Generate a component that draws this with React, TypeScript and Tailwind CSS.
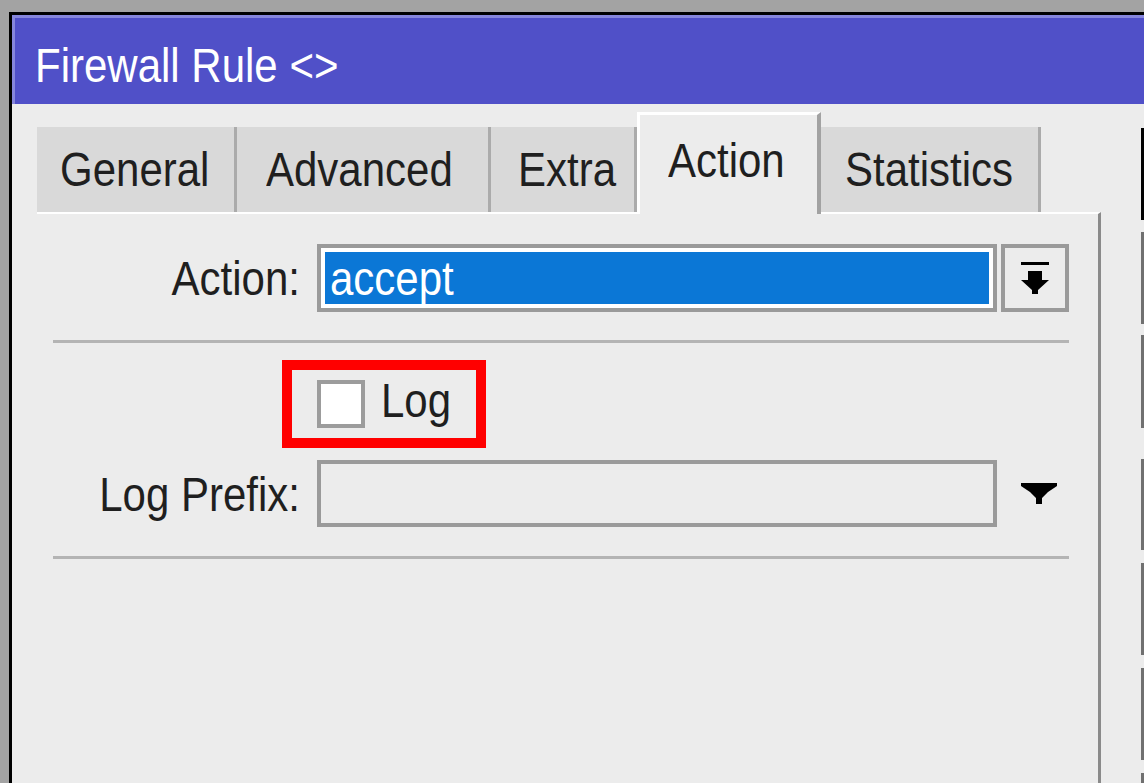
import type { ReactNode } from "react";

function T({ children }: { children: ReactNode }) {
  return <span className="inline-block origin-[50%_80%] scale-y-[1.13]">{children}</span>;
}

function Tab({ label, className }: { label: string; className: string }) {
  return (
    <div className={`h-[85px] shrink-0 bg-[#d9d9d9] border-r-[3px] border-[#ababab] pt-[21px] ${className}`}>
      <T>{label}</T>
    </div>
  );
}

export default function App() {
  return (
    <div className="w-[1144px] h-[783px] overflow-hidden bg-[#a3a3a3] pl-[9px] pt-[12px] font-['Liberation_Sans',Arial,sans-serif] text-[42px] leading-[48px] text-[#1f1f1f]">
      <div className="h-[800px] border-l-[3px] border-t-[3px] border-black bg-[#ececec] flex flex-col">
        {/* Title bar */}
        <div className="h-[89px] shrink-0 bg-[#5050c8] border-t-[3px] border-l-[3px] border-[#8686dc] pl-[20px] pt-[26px] text-white">
          <T>Firewall Rule &lt;&gt;</T>
        </div>

        <div className="flex-1 flex">
          {/* Tabs + panel */}
          <div className="w-[1089px] shrink-0 pl-[25px] pt-[8px] flex flex-col">
            <div className="h-[100px] flex items-end">
              <Tab label="General" className="w-[200px] pl-[23px] border-r-4" />
              <Tab label="Advanced" className="w-[254px] pl-[29px]" />
              <Tab label="Extra" className="w-[146px] pl-[27px] border-r-0" />
              <div className="w-[184px] h-[102px] -mb-[2px] relative z-10 bg-[#ececec] border-l-[3px] border-t-[3px] border-white border-r-4 border-r-[#a2a2a2] pl-[28px] pt-[24px]">
                <T>Action</T>
              </div>
              <Tab label="Statistics" className="w-[220px] pl-[24px]" />
            </div>

            <div className="flex-1 border-t-2 border-white border-r-[3px] border-r-[#8a8a8a] pl-[16px] pr-[29px]">
              {/* Action row */}
              <div className="mt-[30px] h-[68px] flex">
                <div className="w-[247px] text-right pt-[13px]">
                  <T>Action:</T>
                </div>
                <div className="ml-[17px] w-[680px] h-[68px] border-4 border-[#9a9a9a] bg-white p-[4px]">
                  <div className="h-full bg-[#0b77d6] text-white pl-[5px] pt-[5px]">
                    <T>accept</T>
                  </div>
                </div>
                <div className="ml-[4px] w-[68px] h-[68px] border-4 border-[#9a9a9a] flex items-center justify-center">
                  <svg width="28" height="33" viewBox="0 0 28 33" fill="#000">
                    <rect x="0" y="0" width="28" height="3" />
                    <polygon points="7,9 21,9 21,18 28,18 17,28 17,32 11,32 11,28 0,18 7,18" />
                  </svg>
                </div>
              </div>

              <div className="mt-[28px] h-[3px] bg-[#b4b4b4]" />

              {/* Log checkbox */}
              <div className="mt-[17px] ml-[229px] w-[204px] h-[88px] border-[10px] border-[#ff0000] flex items-start pl-[25px] pt-[10px]">
                <div className="w-[48px] h-[48px] shrink-0 border-4 border-[#9c9c9c] bg-white" />
                <div className="ml-[16px] -mt-[1px]">
                  <T>Log</T>
                </div>
              </div>

              {/* Log Prefix row */}
              <div className="mt-[12px] h-[67px] flex">
                <div className="w-[247px] text-right pt-[13px]">
                  <T>Log Prefix:</T>
                </div>
                <div className="ml-[17px] w-[680px] h-[67px] border-4 border-[#9a9a9a]" />
                <div className="ml-[24px] pt-[23px]">
                  <svg width="36" height="21" viewBox="0 0 36 21" fill="#000">
                    <polygon points="0,0 36,0 36,3 27,9 21,15 21,21 15,21 15,15 9,9 0,3" />
                  </svg>
                </div>
              </div>

              <div className="mt-[29px] h-[3px] bg-[#b4b4b4]" />
            </div>
          </div>

          {/* Right button column (clipped) */}
          <div className="flex-1 flex flex-col pl-[40px]">
            <div className="mt-[24px] w-[150px] h-[92px] shrink-0 border-l-[3px] border-black" />
            <div className="mt-[12px] w-[150px] h-[92px] shrink-0 border-l-[3px] border-[#707070]" />
            <div className="mt-[11px] w-[150px] h-[93px] shrink-0 border-l-[3px] border-[#707070]" />
            <div className="mt-[31px] w-[150px] h-[91px] shrink-0 border-l-[3px] border-[#707070]" />
            <div className="mt-[13px] w-[150px] h-[92px] shrink-0 border-l-[3px] border-[#707070]" />
            <div className="mt-[13px] w-[150px] h-[92px] shrink-0 border-l-[3px] border-[#707070]" />
            <div className="mt-[13px] w-[150px] h-[92px] shrink-0 border-l-[3px] border-[#707070]" />
          </div>
        </div>
      </div>
    </div>
  );
}
